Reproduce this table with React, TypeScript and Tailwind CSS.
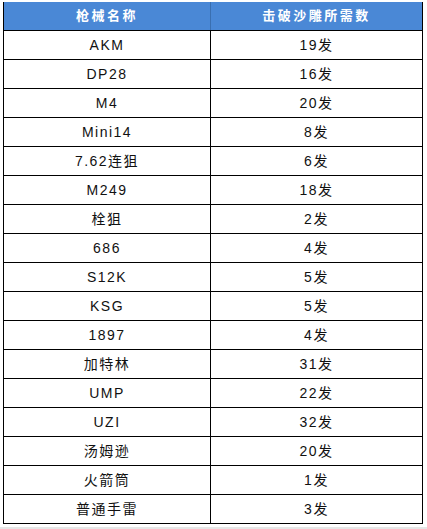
const rows: [string, string][] = [
  ["AKM", "19发"],
  ["DP28", "16发"],
  ["M4", "20发"],
  ["Mini14", "8发"],
  ["7.62连狙", "6发"],
  ["M249", "18发"],
  ["栓狙", "2发"],
  ["686", "4发"],
  ["S12K", "5发"],
  ["KSG", "5发"],
  ["1897", "4发"],
  ["加特林", "31发"],
  ["UMP", "22发"],
  ["UZI", "32发"],
  ["汤姆逊", "20发"],
  ["火箭筒", "1发"],
  ["普通手雷", "3发"],
];

export default function App() {
  return (
    <div
      className="w-[427px] h-[529px] bg-white overflow-hidden"
      style={{ fontFamily: '"Liberation Sans", "Noto Sans CJK SC", sans-serif' }}
    >
      <div className="ml-[3px] mt-[2px] w-[420px] border-x-[1.5px] border-b-[1.5px] border-black">
        <div className="flex h-[28px] bg-[#4a88d6] text-white font-bold text-[13px] tracking-[2.5px]">
          <div className="w-[207px] flex items-center justify-center border-r border-[#3a6fb0]">枪械名称</div>
          <div className="flex-1 flex items-center justify-center">击破沙雕所需数</div>
        </div>
        {rows.map(([name, count]) => (
          <div key={name} className="flex h-[29px] border-t-[1.5px] border-black text-[14px] text-[#111] tracking-[1.5px]">
            <div className="w-[207px] flex items-center justify-center border-r-[1.5px] border-black">{name}</div>
            <div className="flex-1 flex items-center justify-center">{count}</div>
          </div>
        ))}
      </div>
      <div className="mt-[3px] h-[4px] bg-[#e6e6e6]" />
    </div>
  );
}
